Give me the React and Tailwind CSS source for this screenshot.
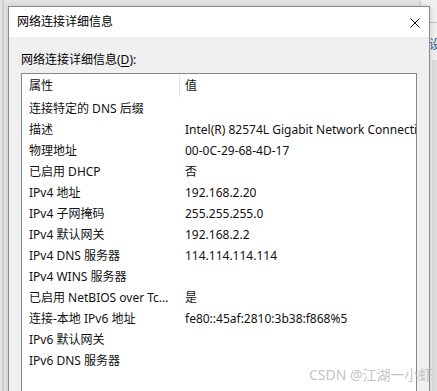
import React from "react";

const rows = [
  ["连接特定的 DNS 后缀", ""],
  ["描述", "Intel(R) 82574L Gigabit Network Connection"],
  ["物理地址", "00-0C-29-68-4D-17"],
  ["已启用 DHCP", "否"],
  ["IPv4 地址", "192.168.2.20"],
  ["IPv4 子网掩码", "255.255.255.0"],
  ["IPv4 默认网关", "192.168.2.2"],
  ["IPv4 DNS 服务器", "114.114.114.114"],
  ["IPv4 WINS 服务器", ""],
  ["已启用 NetBIOS over Tc...", "是"],
  ["连接-本地 IPv6 地址", "fe80::45af:2810:3b38:f868%5"],
  ["IPv6 默认网关", ""],
  ["IPv6 DNS 服务器", ""],
];

const font = { fontFamily: '"Noto Sans", "Noto Sans CJK SC", sans-serif' };

export default function App() {
  return (
    <div
      className="relative w-[437px] h-[391px] overflow-hidden bg-[#e4e4e4] text-[#111]"
      style={font}
    >
      {/* desktop background decorations */}
      <div className="absolute left-[2px] top-0 w-[2px] h-full bg-[#cfcfcf]" />
      <div className="absolute left-[420px] top-0 w-[17px] h-full bg-[#efefef] border-l border-[#d0d0d0]" />
      <div className="absolute left-[429px] top-[22px] w-[8px] h-[1px] bg-[#c4c4c4]" />
      <div className="absolute left-[429px] top-[38px] text-[12px] leading-[14px] text-[#2a4b8d] whitespace-nowrap">
        设
      </div>
      <div className="absolute left-[432px] top-[60px] w-[5px] h-full bg-[#dcdcdc]" />

      {/* dialog */}
      <div className="relative ml-[8px] mt-[6px] w-[422px] h-[400px] border border-[#8a8a8a] bg-[#f0f0f0] shadow-[0_0_6px_rgba(0,0,0,0.15)]">
        <div className="h-[30px] bg-white flex items-center justify-between pl-[8px] pr-[9px]">
          <span className="text-[12px] leading-[16px] text-black">网络连接详细信息</span>
          <svg width="10" height="10" viewBox="0 0 10 10" className="mt-[1px]">
            <path d="M0.5 0.5 L9.5 9.5 M9.5 0.5 L0.5 9.5" stroke="#111" strokeWidth="1" fill="none" />
          </svg>
        </div>
        <div className="px-[12px] pt-[15px]">
          <div className="text-[12px] leading-[16px] text-black">
            网络连接详细信息(<span className="underline underline-offset-2">D</span>):
          </div>
          <div className="mt-[5px] w-[396px] h-[330px] border border-[#828790] bg-white overflow-hidden">
            <div className="flex h-[24px] text-[12px]">
              <div className="w-[158px] flex items-center pl-[7px] border-r border-[#e5e5e5] my-[1px]">属性</div>
              <div className="flex items-center pl-[5px]">值</div>
            </div>
            {rows.map(([k, v], i) => (
              <div key={i} className="flex h-[21px] items-center text-[12px] whitespace-nowrap">
                <div className="w-[158px] shrink-0 pl-[7px] overflow-hidden">{k}</div>
                <div className="pl-[5px] overflow-hidden">{v}</div>
              </div>
            ))}
          </div>
        </div>
      </div>

      {/* watermark */}
      <div className="absolute left-[309px] top-[366px] text-[14px] leading-[18px] text-[#b4b4b4]/80 whitespace-nowrap">
        CSDN @江湖一小虾
      </div>
    </div>
  );
}
